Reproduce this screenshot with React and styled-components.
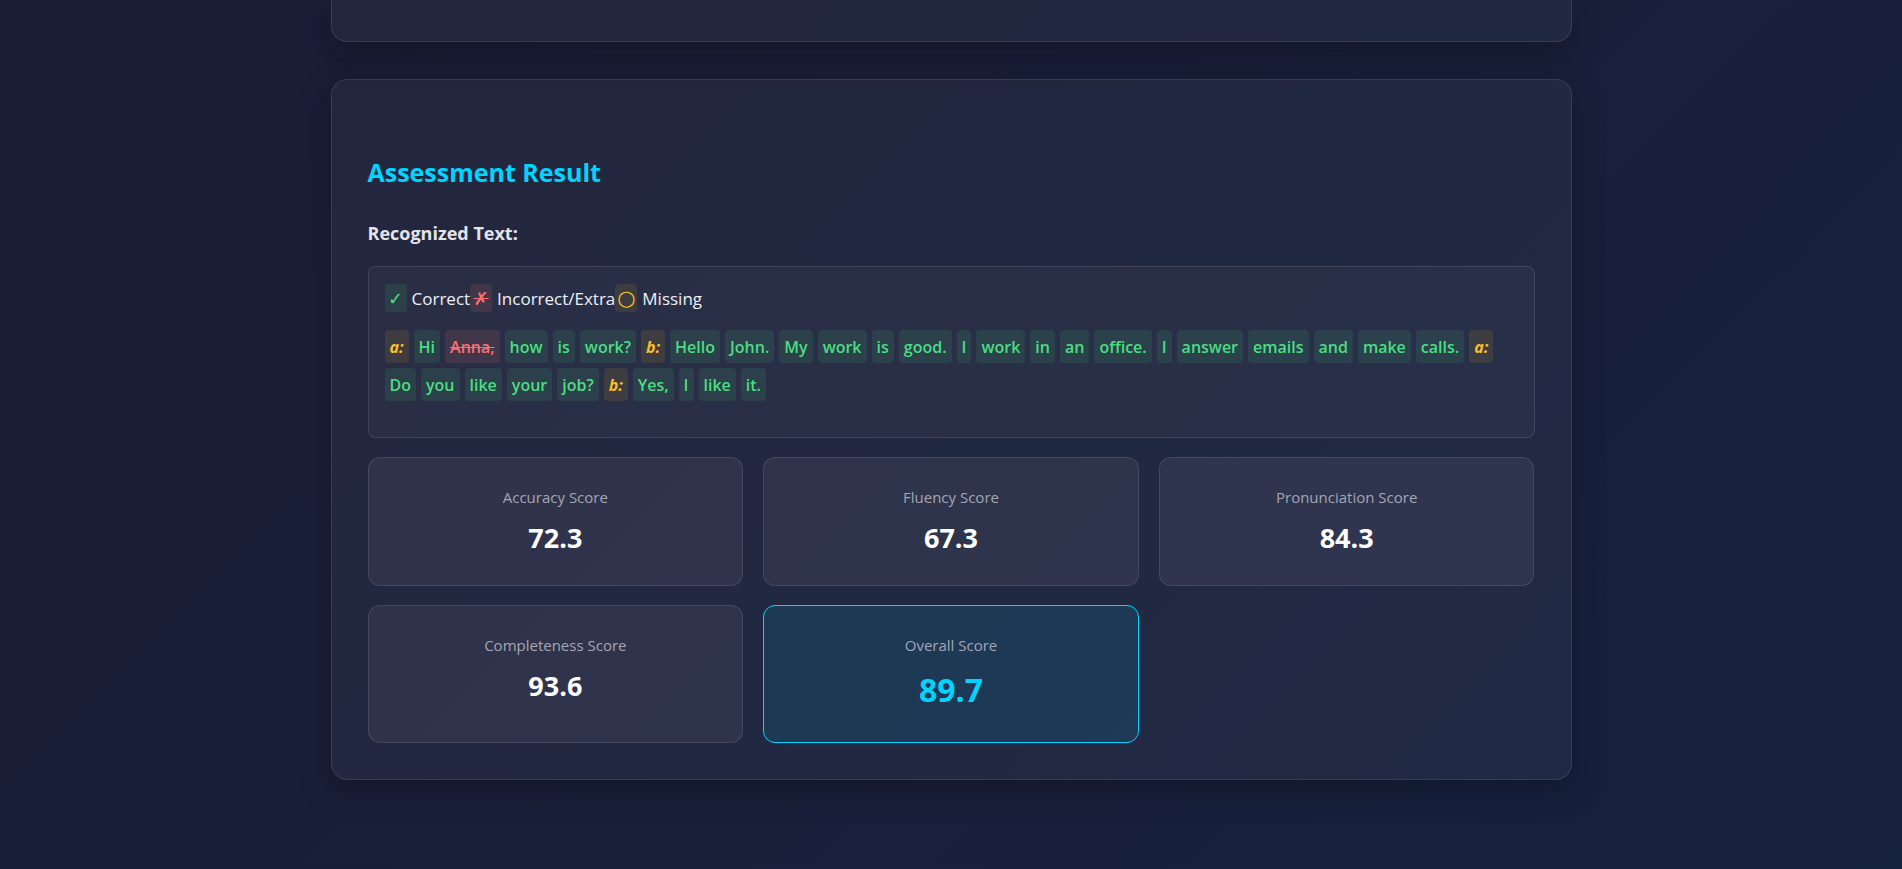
import React from "react";
import styled, { createGlobalStyle } from "styled-components";

const Global = createGlobalStyle`
  html, body {
    margin: 0;
    padding: 0;
  }
  body {
    min-height: 100vh;
    background: linear-gradient(135deg, #1a1d34 0%, #16213e 100%);
    font-family: "Segoe UI", "Open Sans", "Noto Sans", sans-serif;
    color: #e8e8ee;
  }
`;

const Page = styled.div`
  width: 1241px;
  margin: 0 auto;
  padding-bottom: 90px;
`;

const Card = styled.section`
  background: rgba(255, 255, 255, 0.045);
  border: 1px solid rgba(255, 255, 255, 0.1);
  border-radius: 16px;
  box-shadow: 0 10px 32px rgba(0, 0, 0, 0.25);
  box-sizing: border-box;
  padding: 35px 36px 36px;
`;

const ClippedCard = styled(Card)`
  height: 42px;
  border-top: none;
  border-radius: 0 0 16px 16px;
  padding: 0;
  margin-bottom: 37px;
`;

const Title = styled.h2`
  margin: 41px 0 0;
  font-size: 25px;
  line-height: 32px;
  font-weight: 700;
  color: #00d4ff;
`;

const Label = styled.h4`
  margin: 33px 0 21px;
  font-size: 18px;
  line-height: 24px;
  font-weight: 700;
  color: #e2e4ea;
`;

const TextBox = styled.div`
  background: rgba(255, 255, 255, 0.035);
  border: 1px solid rgba(255, 255, 255, 0.1);
  border-radius: 8px;
  padding: 17px 16px 36px;
`;

const Legend = styled.div`
  display: flex;
  align-items: center;
  height: 28px;
  font-size: 17px;
  color: #eef0f4;
  white-space: pre;
`;

const tones = {
  ok: { fg: "#4ade80", bg: "rgba(74, 222, 128, 0.1)" },
  bad: { fg: "#f87171", bg: "rgba(248, 113, 113, 0.12)" },
  miss: { fg: "#fbbf24", bg: "rgba(251, 191, 36, 0.1)" },
};

const Mark = styled.span`
  display: inline-flex;
  align-items: center;
  justify-content: center;
  width: 22px;
  height: 28px;
  border-radius: 4px;
  font-family: "DejaVu Sans", sans-serif;
  font-size: ${(p) => (p.$tone === "miss" ? "21px" : "18px")};
  color: ${(p) => tones[p.$tone].fg};
  background: ${(p) => tones[p.$tone].bg};
  text-decoration: ${(p) => (p.$tone === "bad" ? "line-through" : "none")};
  margin-right: 5px;
`;

const Words = styled.div`
  display: flex;
  flex-wrap: wrap;
  gap: 5px 5px;
  margin-top: 18px;
`;

const Word = styled.span`
  display: inline-flex;
  align-items: center;
  height: 33px;
  padding: 0 5px;
  border-radius: 4px;
  font-size: 16px;
  color: ${(p) => tones[p.$tone].fg};
  background: ${(p) => tones[p.$tone].bg};
  text-decoration: ${(p) => (p.$tone === "bad" ? "line-through" : "none")};
  font-style: ${(p) => (p.$speaker ? "italic" : "normal")};
  font-weight: ${(p) => (p.$speaker ? 700 : 600)};
`;

const Scores = styled.div`
  display: grid;
  grid-template-columns: repeat(3, 1fr);
  gap: 19px 20px;
  margin-top: 19px;
`;

const ScoreCard = styled.div`
  background: ${(p) => (p.$main ? "rgba(0, 212, 255, 0.1)" : "rgba(255, 255, 255, 0.06)")};
  border: 1px solid ${(p) => (p.$main ? "#00d4ff" : "rgba(255, 255, 255, 0.1)")};
  border-radius: 12px;
  padding: 29px 20px 29px;
  text-align: center;
`;

const ScoreLabel = styled.div`
  font-size: 15px;
  line-height: 20px;
  color: #a3a6b4;
  margin-bottom: 12px;
`;

const ScoreValue = styled.div`
  font-size: ${(p) => (p.$main ? "32px" : "27px")};
  line-height: ${(p) => (p.$main ? "46px" : "37px")};
  font-weight: 700;
  color: ${(p) => (p.$main ? "#00d4ff" : "#ffffff")};
`;

const transcript = [
  ["a:", "miss", true],
  ["Hi", "ok"],
  ["Anna,", "bad"],
  ["how", "ok"],
  ["is", "ok"],
  ["work?", "ok"],
  ["b:", "miss", true],
  ["Hello", "ok"],
  ["John.", "ok"],
  ["My", "ok"],
  ["work", "ok"],
  ["is", "ok"],
  ["good.", "ok"],
  ["I", "ok"],
  ["work", "ok"],
  ["in", "ok"],
  ["an", "ok"],
  ["office.", "ok"],
  ["I", "ok"],
  ["answer", "ok"],
  ["emails", "ok"],
  ["and", "ok"],
  ["make", "ok"],
  ["calls.", "ok"],
  ["a:", "miss", true],
  ["Do", "ok"],
  ["you", "ok"],
  ["like", "ok"],
  ["your", "ok"],
  ["job?", "ok"],
  ["b:", "miss", true],
  ["Yes,", "ok"],
  ["I", "ok"],
  ["like", "ok"],
  ["it.", "ok"],
];

const scores = [
  ["Accuracy Score", "72.3"],
  ["Fluency Score", "67.3"],
  ["Pronunciation Score", "84.3"],
  ["Completeness Score", "93.6"],
  ["Overall Score", "89.7", true],
];

const App = () => {
  return (
    <>
      <Global />
      <Page>
        <ClippedCard />
        <Card>
          <Title>Assessment Result</Title>
          <Label>Recognized Text:</Label>
          <TextBox>
            <Legend>
              <Mark $tone="ok">✓</Mark>Correct<Mark $tone="bad">✗</Mark>Incorrect/Extra
              <Mark $tone="miss">○</Mark>Missing
            </Legend>
            <Words>
              {transcript.map(([w, tone, speaker], i) => (
                <Word key={i} $tone={tone} $speaker={speaker}>
                  {w}
                </Word>
              ))}
            </Words>
          </TextBox>
          <Scores>
            {scores.map(([label, value, main]) => (
              <ScoreCard key={label} $main={main}>
                <ScoreLabel>{label}</ScoreLabel>
                <ScoreValue $main={main}>{value}</ScoreValue>
              </ScoreCard>
            ))}
          </Scores>
        </Card>
      </Page>
    </>
  );
};

export default App;
